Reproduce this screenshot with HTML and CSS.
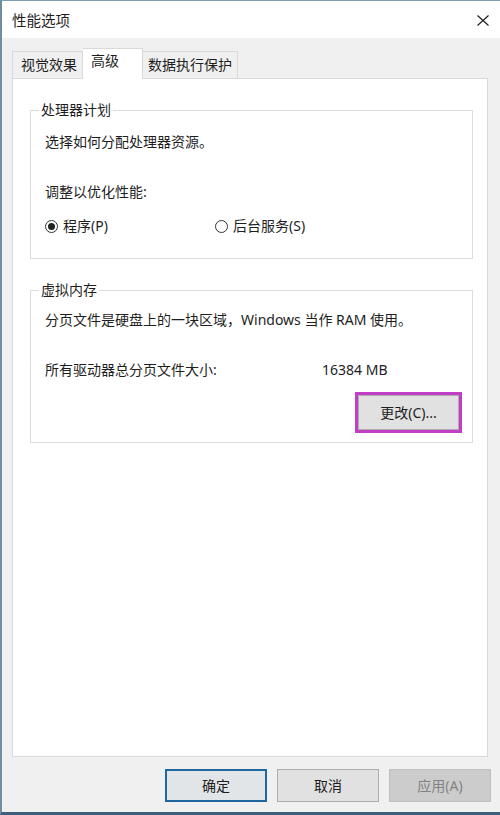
FILE: index.html
```html
<!DOCTYPE html>
<html lang="zh-CN">
<head>
<meta charset="utf-8">
<title>性能选项</title>
<link rel="stylesheet" href="styles.css">
</head>
<body>
<div class="window">
  <div class="titlebar">
    <span class="title">性能选项</span>
    <svg class="close" width="12" height="11" viewBox="0 0 12 11"><path d="M0.5 0.5 L11.5 10.5 M11.5 0.5 L0.5 10.5" stroke="#1a1a1a" stroke-width="1.1" fill="none"/></svg>
  </div>
  <div class="body">
    <div class="tabs">
      <div class="tab tab-visual">视觉效果</div>
      <div class="tab tab-adv selected">高级</div>
      <div class="tab tab-dep">数据执行保护</div>
    </div>
    <div class="panel">
      <fieldset class="group group-cpu">
        <legend>处理器计划</legend>
        <div class="group-inner">
          <div class="row">选择如何分配处理器资源。</div>
          <div class="row row-gap">调整以优化性能:</div>
          <div class="radios">
            <label class="radio"><span class="dot checked"></span><span>程序(P)</span></label>
            <label class="radio"><span class="dot"></span><span>后台服务(S)</span></label>
          </div>
        </div>
      </fieldset>
      <fieldset class="group group-vm">
        <legend>虚拟内存</legend>
        <div class="group-inner vm-inner">
          <div class="row">分页文件是硬盘上的一块区域，Windows 当作 RAM 使用。</div>
          <div class="row row-gap size-row"><span class="size-label">所有驱动器总分页文件大小:</span><span>16384 MB</span></div>
          <div class="change-row">
            <div class="highlight"><div class="btn change-btn">更改(C)...</div></div>
          </div>
        </div>
      </fieldset>
    </div>
    <div class="footer">
      <div class="btn default">确定</div>
      <div class="btn">取消</div>
      <div class="btn disabled">应用(A)</div>
    </div>
  </div>
</div>
</body>
</html>
```
FILE: styles.css
```css
* { box-sizing: border-box; }
html, body { margin: 0; padding: 0; }
body {
  font-family: "Noto Sans", "Noto Sans CJK SC", sans-serif;
  font-size: 14px;
  color: #1e1e1e;
  background: #f0f0f0;
}
.window {
  height: 815px;
  display: flex;
  flex-direction: column;
  border-top: 1px solid #7c9fb3;
  border-left: 2px solid #6f8ca0;
  border-bottom: 3px solid #3f5d78;
  background: #f0f0f0;
}
.titlebar {
  height: 37px;
  background: #ffffff;
  display: flex;
  align-items: center;
  justify-content: space-between;
  padding: 0 11px 0 10px;
}
.title { font-size: 14.5px; line-height: 20px; }
.close { display: block; margin-top: 1px; }
.body {
  flex: 1;
  display: flex;
  flex-direction: column;
  padding: 10px 0 10px 10px;
}
.tabs {
  height: 30px;
  display: flex;
  align-items: flex-end;
}
.tab {
  height: 27px;
  line-height: 26px;
  border: 1px solid #d9d9d9;
  border-bottom: none;
  background: #f0f0f0;
  white-space: nowrap;
}
.tab-visual { width: 71px; padding-left: 8px; }
.tab-adv { width: 60px; padding-left: 8px; }
.tab-dep { width: 95px; padding-left: 5px; border-left: none; }
.tab.selected {
  height: 31px;
  margin-bottom: -1px;
  background: #ffffff;
  line-height: 24px;
  position: relative;
  z-index: 1;
  border-left: none;
}
.panel {
  flex: 1;
  width: 476px;
  background: #ffffff;
  border: 1px solid #d9d9d9;
  padding: 21px 14px 0 17px;
}
.group {
  margin: 0;
  padding: 0;
  border: 1px solid #dcdcdc;
  min-width: 0;
}
.group legend {
  margin-left: 8px;
  padding: 0 2px;
  line-height: 20px;
}
.group-vm { margin-top: 21px; }
.group-inner { padding: 12px 14px 22px 14px; }
.vm-inner { padding: 10px 10px 9px 14px; }
.row { line-height: 20px; white-space: nowrap; }
.row-gap { margin-top: 30px; }
.radios {
  margin-top: 14px;
  display: grid;
  grid-template-columns: 170px auto;
  line-height: 20px;
}
.radio { display: flex; align-items: center; gap: 5px; }
.dot {
  width: 13px;
  height: 13px;
  border: 1px solid #333333;
  border-radius: 50%;
  display: flex;
  align-items: center;
  justify-content: center;
  background: #ffffff;
}
.dot.checked::after {
  content: "";
  width: 7px;
  height: 7px;
  border-radius: 50%;
  background: #222222;
}
.size-row { display: flex; }
.size-label { width: 277px; }
.change-row {
  margin-top: 12px;
  display: flex;
  justify-content: flex-end;
}
.highlight {
  width: 107px;
  height: 41px;
  border: 3px solid #c23ec6;
}
.btn {
  width: 102px;
  height: 33px;
  border: 1px solid #adadad;
  background: #e1e1e1;
  display: flex;
  align-items: center;
  justify-content: center;
  line-height: 20px;
}
.change-btn { width: 101px; height: 35px; }
.footer {
  margin-top: 12px;
  display: flex;
  justify-content: flex-end;
  gap: 10px;
  padding-right: 9px;
}
.btn.default {
  border: 2px solid #1f67a3;
  background: #e2e5e8;
}
.btn.disabled {
  background: #cccccc;
  border-color: #bfbfbf;
  color: #838383;
}
```
